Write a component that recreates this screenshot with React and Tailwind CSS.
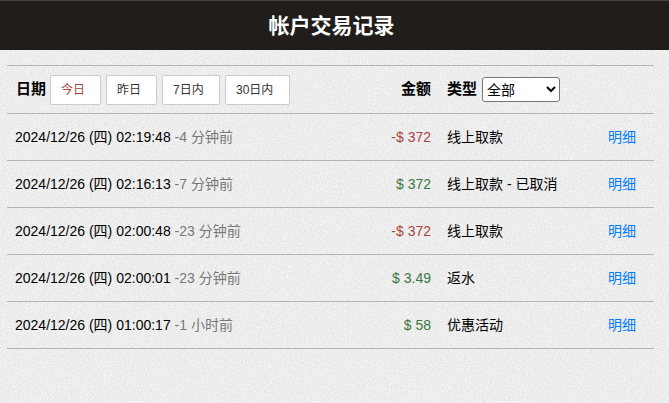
const ROWS = [
  { time: "2024/12/26 (四) 02:19:48", ago: "-4 分钟前", amount: "-$ 372", type: "线上取款", negative: true },
  { time: "2024/12/26 (四) 02:16:13", ago: "-7 分钟前", amount: "$ 372", type: "线上取款 - 已取消" },
  { time: "2024/12/26 (四) 02:00:48", ago: "-23 分钟前", amount: "-$ 372", type: "线上取款", negative: true },
  { time: "2024/12/26 (四) 02:00:01", ago: "-23 分钟前", amount: "$ 3.49", type: "返水" },
  { time: "2024/12/26 (四) 01:00:17", ago: "-1 小时前", amount: "$ 58", type: "优惠活动" },
];

const FONT = "font-['Liberation_Sans','Noto_Sans_CJK_SC',sans-serif]";

// page background has a fine grey grain
function Grain() {
  return (
    <svg className="absolute inset-0 h-full w-full" aria-hidden="true">
      <filter id="grain" x="0" y="0" width="100%" height="100%" colorInterpolationFilters="sRGB">
        <feTurbulence type="fractalNoise" baseFrequency="0.7" numOctaves="2" seed="4" />
        <feColorMatrix
          type="matrix"
          values="0.13 0 0 0 0.865  0.13 0 0 0 0.865  0.13 0 0 0 0.865  0 0 0 0 1"
        />
      </filter>
      <rect width="100%" height="100%" filter="url(#grain)" />
    </svg>
  );
}

function RangeButton({ label, active = false, width }) {
  return (
    <button
      type="button"
      className={`h-[30px] ${width} rounded-[2px] border border-[#ccc] bg-white pl-[10px] text-left text-xs ${
        active ? "text-[#a94442]" : "text-[#333]"
      }`}
    >
      {label}
    </button>
  );
}

function Row({ row }) {
  return (
    <div className="flex h-[47px] items-center border-b border-[#b5b5b5] text-sm leading-5">
      <div className="w-[8px]" />
      <div className="flex-1 text-black">
        {row.time} <span className="text-[#777]">{row.ago}</span>
      </div>
      <div className={`w-[100px] text-right ${row.negative ? "text-[#a94442]" : "text-[#3c763d]"}`}>
        {row.amount}
      </div>
      <div className="ml-4 w-[161px] text-black">{row.type}</div>
      <a className="w-[46px] text-[#007bff]">明细</a>
    </div>
  );
}

export default function App() {
  return (
    <div className={`relative h-[403px] overflow-hidden bg-[#ebebeb] ${FONT}`}>
      <Grain />
      <div className="relative">
        <header className="flex h-[50px] items-center justify-center border-t border-[#444] bg-[#201d1b] pr-[6px] text-[21px] font-bold text-white">
          帐户交易记录
        </header>
        <main className="mx-[7px] mt-[15px] w-[647px] border-t border-[#b5b5b5]">
          <div className="flex h-[48px] items-center border-b border-[#b5b5b5] text-[15px]">
            <span className="ml-[9px] w-[34px] font-bold text-black">日期</span>
            <div className="flex gap-[5px]">
              <RangeButton label="今日" active width="w-[51px]" />
              <RangeButton label="昨日" width="w-[51px]" />
              <RangeButton label="7日内" width="w-[58px]" />
              <RangeButton label="30日内" width="w-[65px]" />
            </div>
            <span className="ml-[111px] font-bold text-black">金额</span>
            <span className="ml-4 font-bold text-black">类型</span>
            <select className="ml-[5px] h-[25px] w-[78px] rounded-[3px] border border-[#767676] bg-white text-sm text-black">
              <option>全部</option>
            </select>
          </div>
          {ROWS.map((row) => (
            <Row key={row.time} row={row} />
          ))}
        </main>
      </div>
    </div>
  );
}
